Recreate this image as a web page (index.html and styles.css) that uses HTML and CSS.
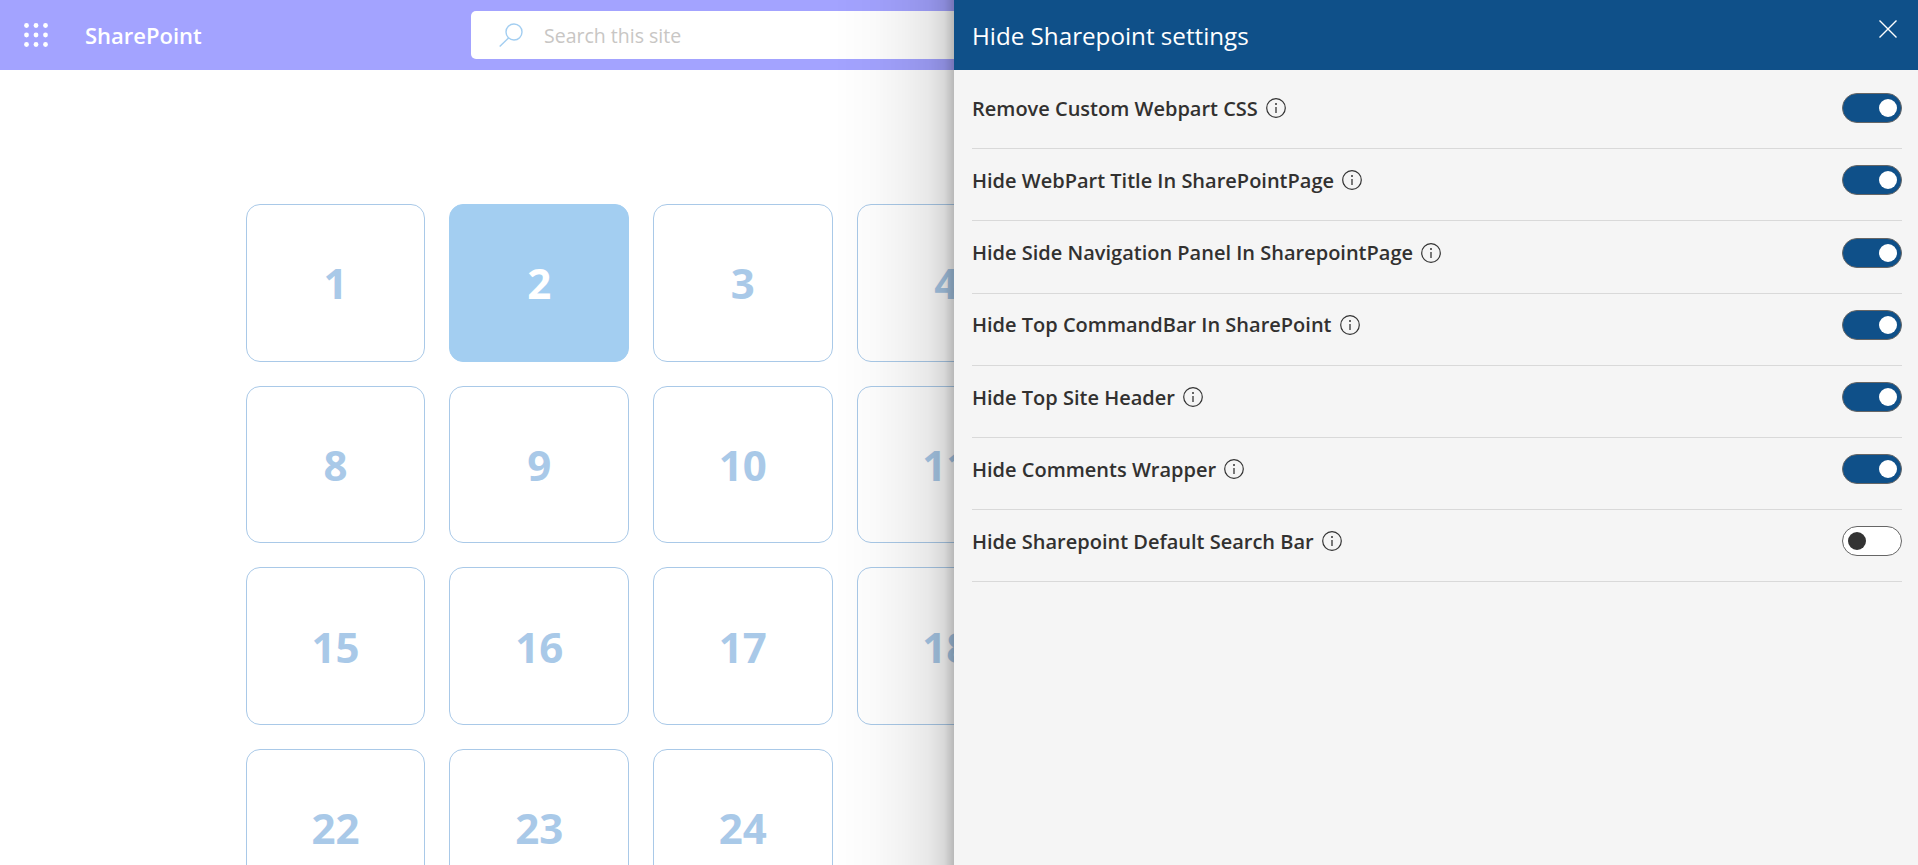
FILE: index.html
```html
<!DOCTYPE html>
<html lang="en">
<head>
    <meta charset="UTF-8">
    <meta name="viewport" content="width=device-width, initial-scale=1.0">
    <title>Hide Sharepoint settings</title>
    <link rel="stylesheet" href="styles.css">
</head>
<body>
    <header class="topbar">
        <svg class="waffle" width="24" height="24" viewBox="0 0 24 24" fill="#fff">
            <circle cx="2.5" cy="2.5" r="2.4"/><circle cx="12" cy="2.5" r="2.4"/><circle cx="21.5" cy="2.5" r="2.4"/>
            <circle cx="2.5" cy="12" r="2.4"/><circle cx="12" cy="12" r="2.4"/><circle cx="21.5" cy="12" r="2.4"/>
            <circle cx="2.5" cy="21.5" r="2.4"/><circle cx="12" cy="21.5" r="2.4"/><circle cx="21.5" cy="21.5" r="2.4"/>
        </svg>
        <span class="brand">SharePoint</span>
        <div class="search">
            <svg width="24" height="24" viewBox="0 0 24 24" fill="none" stroke="#a3cef1" stroke-width="1.4">
                <circle cx="15" cy="9" r="8"/>
                <path d="M9.5 15 L0.7 23.5"/>
            </svg>
            <span class="search-text">Search this site</span>
        </div>
    </header>

    <main class="tiles">
        <div class="tile">1</div>
        <div class="tile selected">2</div>
        <div class="tile">3</div>
        <div class="tile">4</div>
        <div class="tile">8</div>
        <div class="tile">9</div>
        <div class="tile">10</div>
        <div class="tile">11</div>
        <div class="tile">15</div>
        <div class="tile">16</div>
        <div class="tile">17</div>
        <div class="tile">18</div>
        <div class="tile">22</div>
        <div class="tile">23</div>
        <div class="tile">24</div>
    </main>

    <aside class="panel">
        <div class="panel-head">
            <h1>Hide Sharepoint settings</h1>
            <svg width="18" height="18" viewBox="0 0 18 18" stroke="#fff" stroke-width="1.4">
                <path d="M0.5 0.5 L17.5 17.5 M17.5 0.5 L0.5 17.5"/>
            </svg>
        </div>
        <div class="settings">
            <div class="row">
                <span class="label">Remove Custom Webpart CSS</span>
                <svg class="info" width="20" height="20" viewBox="0 0 20 20"><circle cx="10" cy="10" r="9.3" fill="none" stroke="#333" stroke-width="1.2"/><path d="M10 9 V15" stroke="#333" stroke-width="1.3"/><circle cx="10" cy="6" r="1" fill="#333"/></svg>
                <span class="toggle on"></span>
            </div>
            <div class="row">
                <span class="label">Hide WebPart Title In SharePointPage</span>
                <svg class="info" width="20" height="20" viewBox="0 0 20 20"><circle cx="10" cy="10" r="9.3" fill="none" stroke="#333" stroke-width="1.2"/><path d="M10 9 V15" stroke="#333" stroke-width="1.3"/><circle cx="10" cy="6" r="1" fill="#333"/></svg>
                <span class="toggle on"></span>
            </div>
            <div class="row">
                <span class="label">Hide Side Navigation Panel In SharepointPage</span>
                <svg class="info" width="20" height="20" viewBox="0 0 20 20"><circle cx="10" cy="10" r="9.3" fill="none" stroke="#333" stroke-width="1.2"/><path d="M10 9 V15" stroke="#333" stroke-width="1.3"/><circle cx="10" cy="6" r="1" fill="#333"/></svg>
                <span class="toggle on"></span>
            </div>
            <div class="row">
                <span class="label">Hide Top CommandBar In SharePoint</span>
                <svg class="info" width="20" height="20" viewBox="0 0 20 20"><circle cx="10" cy="10" r="9.3" fill="none" stroke="#333" stroke-width="1.2"/><path d="M10 9 V15" stroke="#333" stroke-width="1.3"/><circle cx="10" cy="6" r="1" fill="#333"/></svg>
                <span class="toggle on"></span>
            </div>
            <div class="row">
                <span class="label">Hide Top Site Header</span>
                <svg class="info" width="20" height="20" viewBox="0 0 20 20"><circle cx="10" cy="10" r="9.3" fill="none" stroke="#333" stroke-width="1.2"/><path d="M10 9 V15" stroke="#333" stroke-width="1.3"/><circle cx="10" cy="6" r="1" fill="#333"/></svg>
                <span class="toggle on"></span>
            </div>
            <div class="row">
                <span class="label">Hide Comments Wrapper</span>
                <svg class="info" width="20" height="20" viewBox="0 0 20 20"><circle cx="10" cy="10" r="9.3" fill="none" stroke="#333" stroke-width="1.2"/><path d="M10 9 V15" stroke="#333" stroke-width="1.3"/><circle cx="10" cy="6" r="1" fill="#333"/></svg>
                <span class="toggle on"></span>
            </div>
            <div class="row">
                <span class="label">Hide Sharepoint Default Search Bar</span>
                <svg class="info" width="20" height="20" viewBox="0 0 20 20"><circle cx="10" cy="10" r="9.3" fill="none" stroke="#333" stroke-width="1.2"/><path d="M10 9 V15" stroke="#333" stroke-width="1.3"/><circle cx="10" cy="6" r="1" fill="#333"/></svg>
                <span class="toggle"></span>
            </div>
        </div>
    </aside>
</body>
</html>
```

FILE: styles.css
```css
html, body {
    height: 100%;
}
body {
    margin: 0;
    overflow: hidden;
    background: #fff;
    font-family: "Open Sans", "Noto Sans", sans-serif;
    color: #323130;
}
.topbar {
    display: flex;
    align-items: center;
    height: 70px;
    padding-left: 24px;
    background: #a3a3ff;
}
.brand {
    width: 386px;
    margin-left: 37px;
    color: #fff;
    font-size: 22px;
    font-weight: 600;
}
.search {
    display: flex;
    align-items: center;
    gap: 21px;
    width: 600px;
    height: 48px;
    padding-left: 28px;
    background: #fff;
    border-radius: 5px;
}
.search-text {
    color: #c8c6c4;
    font-size: 19.5px;
}
.tiles {
    display: grid;
    grid-template-columns: repeat(4, 179.6px);
    grid-auto-rows: 157.67px;
    gap: 24px;
    padding: 134px 0 0 245.8px;
}
.tile {
    display: flex;
    align-items: center;
    justify-content: center;
    border: 1px solid #a9c9e8;
    border-radius: 14px;
    color: #a9c9e8;
    font-size: 42px;
    font-weight: 700;
}
.tile.selected {
    background: #a3cef1;
    border-color: #a3cef1;
    color: #fff;
}
.panel {
    position: fixed;
    top: 0;
    right: 0;
    bottom: 0;
    width: 964px;
    background: #f5f5f5;
}
/* shadow is a gradient so it doesn't fade out at the window edges */
.panel::before {
    content: "";
    position: absolute;
    top: 0;
    bottom: 0;
    right: 100%;
    width: 120px;
    background: linear-gradient(to left, rgba(0, 0, 0, 0.28), rgba(0, 0, 0, 0.15) 10px, rgba(0, 0, 0, 0.09) 25px, rgba(0, 0, 0, 0.05) 50px, rgba(0, 0, 0, 0.02) 80px, rgba(0, 0, 0, 0));
}
.panel-head {
    display: flex;
    align-items: center;
    justify-content: space-between;
    height: 70px;
    padding: 0 21px 0 18px;
    background: #0f5089;
}
.panel-head svg {
    margin-bottom: 12px;
}
.panel-head h1 {
    margin: 0;
    color: #fff;
    font-size: 24.2px;
    font-weight: 400;
}
.settings {
    padding: 7px 16px 0 18px;
}
.row {
    display: flex;
    align-items: center;
    height: 30px;
    padding: 17px 0 25px;
    border-bottom: 1px solid #d9d9d9;
    margin-top: -0.8px;
}
.label {
    font-size: 20px;
    font-weight: 600;
}
.info {
    margin-left: 8px;
}
.toggle {
    position: relative;
    box-sizing: border-box;
    width: 60px;
    height: 30px;
    margin-left: auto;
    border: 1px solid #666;
    border-radius: 15px;
    background: #fff;
}
.toggle::after {
    content: "";
    position: absolute;
    top: 5px;
    left: 5px;
    width: 18px;
    height: 18px;
    border-radius: 50%;
    background: #333;
}
.toggle.on {
    background: #0f5089;
}
.toggle.on::after {
    left: auto;
    right: 4px;
    background: #fff;
}
```
